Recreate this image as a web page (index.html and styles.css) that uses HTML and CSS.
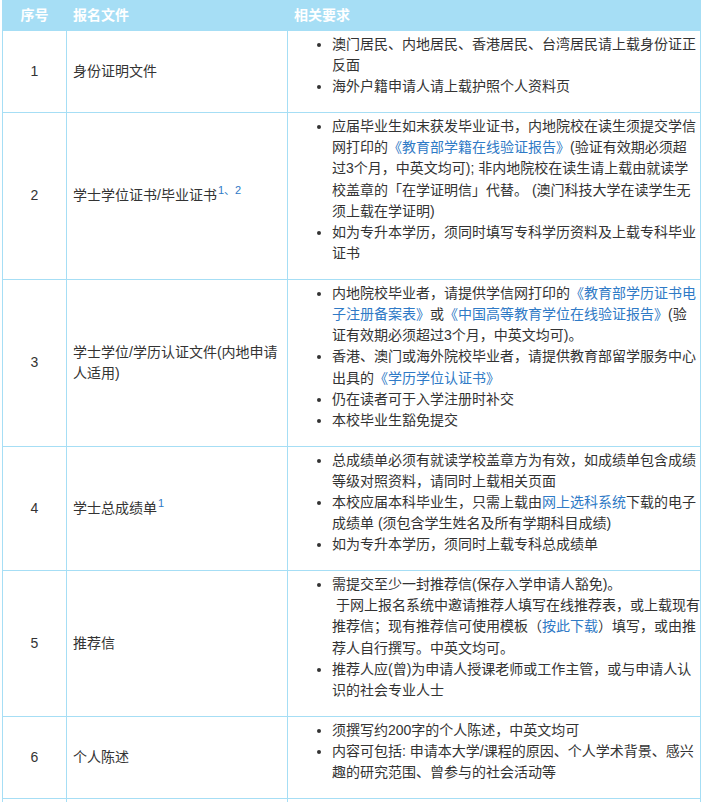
FILE: index.html
```html
<!DOCTYPE html>
<html lang="zh-CN">
<head>
<meta charset="utf-8">
<title>报名文件</title>
<link rel="stylesheet" href="styles.css">
</head>
<body>
<div class="wrap">
<table class="docs">
  <colgroup>
    <col class="c-no">
    <col class="c-name">
    <col class="c-req">
  </colgroup>
  <thead>
    <tr>
      <th class="no">序号</th>
      <th>报名文件</th>
      <th>相关要求</th>
    </tr>
  </thead>
  <tbody>
    <tr>
      <td class="no">1</td>
      <td class="name">身份证明文件</td>
      <td class="req">
        <ul>
          <li>澳门居民、内地居民、香港居民、台湾居民请上载身份证正反面</li>
          <li>海外户籍申请人请上载护照个人资料页</li>
        </ul>
      </td>
    </tr>
    <tr>
      <td class="no">2</td>
      <td class="name">学士学位证书/毕业证书<sup class="note">1、2</sup></td>
      <td class="req">
        <ul>
          <li>应届毕业生如末获发毕业证书，内地院校在读生须提交学信网打印的<a class="link" href="#">《教育部学籍在线验证报告》</a>(验证有效期必须超过3个月，中英文均可); 非内地院校在读生请上载由就读学校盖章的「在学证明信」代替。 (澳门科技大学在读学生无须上载在学证明)</li>
          <li>如为专升本学历，须同时填写专科学历资料及上载专科毕业证书</li>
        </ul>
      </td>
    </tr>
    <tr>
      <td class="no">3</td>
      <td class="name">学士学位/学历认证文件(内地申请人适用)</td>
      <td class="req">
        <ul>
          <li>内地院校毕业者，请提供学信网打印的<a class="link" href="#">《教育部学历证书电子注册备案表》</a>或<a class="link" href="#">《中国高等教育学位在线验证报告》</a>(验证有效期必须超过3个月，中英文均可)。</li>
          <li>香港、澳门或海外院校毕业者，请提供教育部留学服务中心出具的<a class="link" href="#">《学历学位认证书》</a></li>
          <li>仍在读者可于入学注册时补交</li>
          <li>本校毕业生豁免提交</li>
        </ul>
      </td>
    </tr>
    <tr>
      <td class="no">4</td>
      <td class="name">学士总成绩单<sup class="note">1</sup></td>
      <td class="req">
        <ul>
          <li>总成绩单必须有就读学校盖章方为有效，如成绩单包含成绩等级对照资料，请同时上载相关页面</li>
          <li>本校应届本科毕业生，只需上载由<a class="link" href="#">网上选科系统</a>下载的电子成绩单 (须包含学生姓名及所有学期科目成绩)</li>
          <li>如为专升本学历，须同时上载专科总成绩单</li>
        </ul>
      </td>
    </tr>
    <tr>
      <td class="no">5</td>
      <td class="name">推荐信</td>
      <td class="req">
        <ul>
          <li>需提交至少一封推荐信(保存入学申请人豁免)。<br>&nbsp;于网上报名系统中邀请推荐人填写在线推荐表，或上载现有推荐信；现有推荐信可使用模板（<a class="link" href="#">按此下载</a>）填写，或由推荐人自行撰写。中英文均可。</li>
          <li>推荐人应(曾)为申请人授课老师或工作主管，或与申请人认识的社会专业人士</li>
        </ul>
      </td>
    </tr>
    <tr>
      <td class="no">6</td>
      <td class="name">个人陈述</td>
      <td class="req">
        <ul>
          <li>须撰写约200字的个人陈述，中英文均可</li>
          <li>内容可包括: 申请本大学/课程的原因、个人学术背景、感兴趣的研究范围、曾参与的社会活动等</li>
        </ul>
      </td>
    </tr>
    <tr class="more">
      <td class="no"></td>
      <td class="name"></td>
      <td class="req"></td>
    </tr>
  </tbody>
</table>
</div>
</body>
</html>
```
FILE: styles.css
```css
html, body {
  margin: 0;
  padding: 0;
  background: #ffffff;
}

body {
  font-family: "Liberation Sans", "Noto Sans CJK SC", sans-serif;
  font-size: 14px;
  color: #333333;
  overflow: hidden;
}

.wrap {
  padding: 0 2px;
}

.docs {
  border-collapse: collapse;
  table-layout: fixed;
  width: 698px;
}

.c-no { width: 64px; }
.c-name { width: 221px; }
.c-req { width: 413px; }

.docs th,
.docs td {
  border: 1px solid #a6def5;
  line-height: 21.2px;
}

.docs th {
  background: #a6def5;
  color: #ffffff;
  font-weight: bold;
  text-align: left;
  height: 29px;
  padding: 0 6px;
  vertical-align: middle;
}

.docs th.no,
.docs td.no {
  text-align: center;
  padding: 0;
}

.docs td {
  vertical-align: middle;
  padding: 3px 6px;
}

.docs td.req {
  vertical-align: top;
  padding: 3px 0 3px 6px;
}

.req ul {
  margin: 0 0 11.4px;
  padding-left: 38px;
}

.link {
  color: #2f7ac6;
  text-decoration: none;
}

.note {
  color: #2f7ac6;
  font-size: 11px;
  line-height: 0;
  vertical-align: 6px;
  margin-left: 1px;
}

.more td {
  height: 40px;
}
```
